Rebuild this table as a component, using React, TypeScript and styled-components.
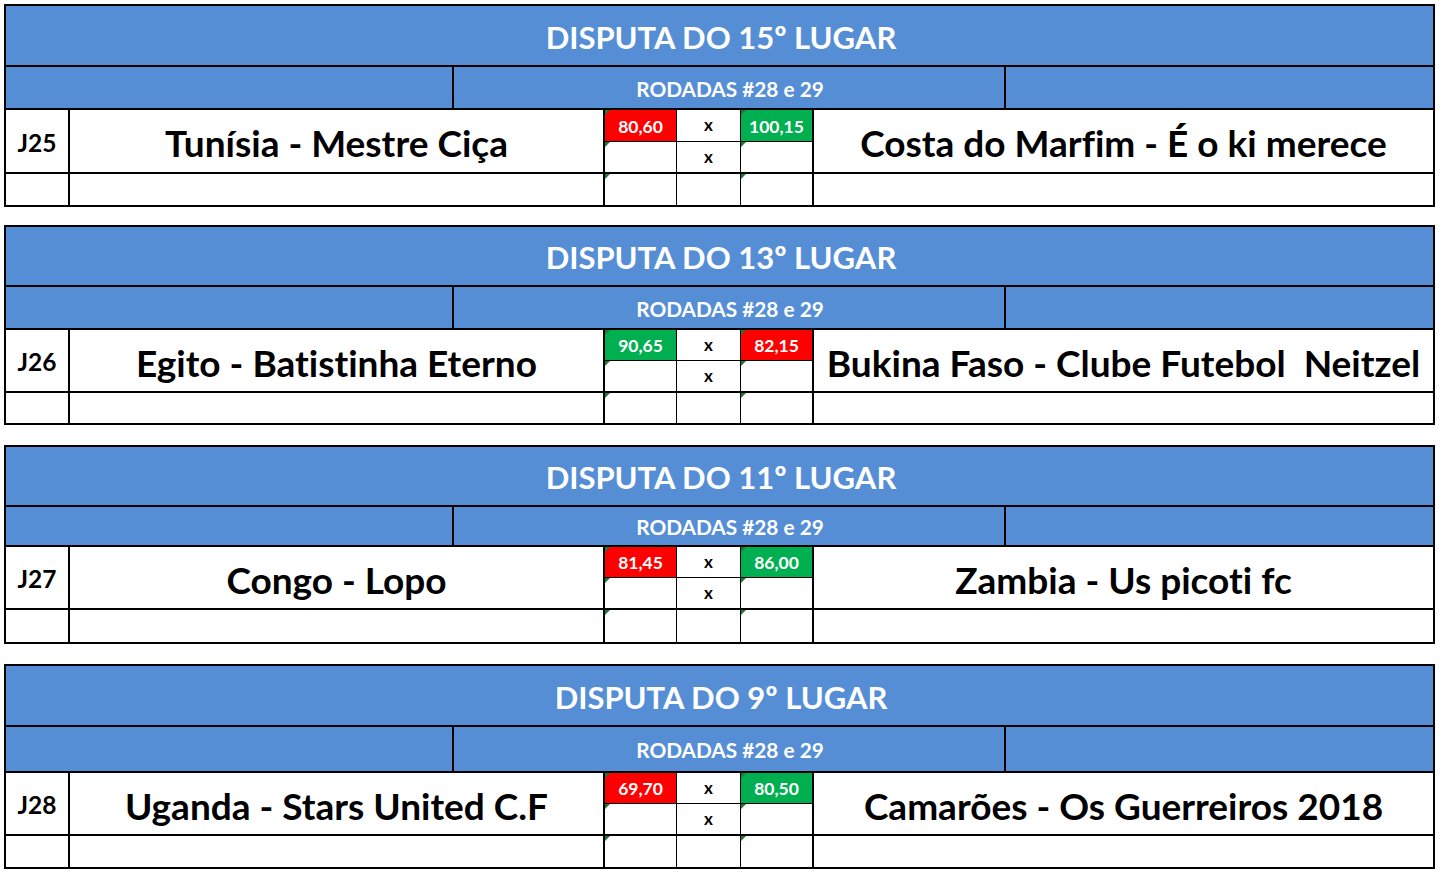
import React from "react";
import styled, { createGlobalStyle } from "styled-components";

const GlobalStyle = createGlobalStyle`
  html, body {
    margin: 0;
    padding: 0;
    background: #ffffff;
  }
  body {
    font-family: Lato, "Open Sans", "Liberation Sans", sans-serif;
    font-weight: 700;
    font-variant-ligatures: none;
  }
  * { box-sizing: border-box; }
`;

const BLUE = "#558ed5";
const RED = "#ff0000";
const GREEN = "#00b050";

const Page = styled.div`
  display: flex;
  flex-direction: column;
  padding: 4px 6px 0 4px;
  width: 1441px;
`;

const Block = styled.section<{ $gap: number }>`
  width: 1431px;
  margin-top: ${(p) => p.$gap}px;
  border: 2px solid #000;
  display: flex;
  flex-direction: column;
  &:first-child { margin-top: 0; }
`;

const TitleRow = styled.div<{ $h: number }>`
  height: ${(p) => p.$h + 2}px;
  background: ${BLUE};
  border-bottom: 2px solid #000;
  color: #fff;
  font-size: 31px;
  display: flex;
  align-items: center;
  justify-content: center;
  padding-left: 3px;
  padding-top: 2px;
`;

const SubRow = styled.div<{ $h: number }>`
  height: ${(p) => p.$h + 2}px;
  display: grid;
  grid-template-columns: 448px 552px 427px;
  border-bottom: 2px solid #000;
  background: ${BLUE};
`;

const SubCell = styled.div<{ $last?: boolean }>`
  border-right: ${(p) => (p.$last ? "none" : "2px solid #000")};
  color: #fff;
  font-size: 20.8px;
  display: flex;
  align-items: center;
  justify-content: center;
  padding-top: 1px;
  padding-left: 2px;
`;

const MatchGrid = styled.div<{ $a: number; $b: number; $c: number }>`
  display: grid;
  grid-template-columns: 64px 535px 72px 64px 73px 619px;
  grid-template-rows: ${(p) => `${p.$a + 1}px ${p.$b + 2}px ${p.$c}px`};
  background: #fff;
`;

const Cell = styled.div<{
  $right?: number;
  $bottom?: number;
  $span?: boolean;
}>`
  position: relative;
  border-right: ${(p) => (p.$right ?? 2)}px solid #000;
  border-bottom: ${(p) => (p.$bottom ?? 0)}px solid #000;
  grid-row: ${(p) => (p.$span ? "span 2" : "auto")};
  display: flex;
  align-items: center;
  justify-content: center;
  color: #000;
  white-space: pre;
  overflow: hidden;
`;

const CodeCell = styled(Cell)`
  font-size: 24.5px;
  padding-top: 2px;
`;

const TeamCell = styled(Cell)`
  font-size: 37px;
  padding-top: 3px;
`;

const ScoreCell = styled(Cell)<{ $bg?: string }>`
  background: ${(p) => p.$bg ?? "#fff"};
  color: #fff;
  font-size: 17.5px;
  padding-top: 1px;
  &::before {
    content: "";
    position: absolute;
    left: 0;
    top: 0;
    border-style: solid;
    border-width: 5px 5px 0 0;
    border-color: #1f7a36 transparent transparent transparent;
  }
`;

const VsCell = styled(Cell)`
  font-size: 17px;
  padding-bottom: 2px;
`;

type Match = {
  title: string;
  code: string;
  home: string;
  away: string;
  homeScore: string;
  awayScore: string;
  homeWin: boolean;
  gap: number;
  titleH: number;
  subH: number;
  rows: [number, number, number];
};

const matches: Match[] = [
  {
    title: "DISPUTA DO 15º LUGAR",
    code: "J25",
    home: "Tunísia - Mestre Ciça",
    away: "Costa do Marfim - É o ki merece",
    homeScore: "80,60",
    awayScore: "100,15",
    homeWin: false,
    gap: 0,
    titleH: 59,
    subH: 41,
    rows: [31, 30, 31],
  },
  {
    title: "DISPUTA DO 13º LUGAR",
    code: "J26",
    home: "Egito - Batistinha Eterno",
    away: "Bukina Faso - Clube Futebol  Neitzel",
    homeScore: "90,65",
    awayScore: "82,15",
    homeWin: true,
    gap: 18,
    titleH: 58,
    subH: 41,
    rows: [30, 30, 30],
  },
  {
    title: "DISPUTA DO 11º LUGAR",
    code: "J27",
    home: "Congo - Lopo",
    away: "Zambia - Us picoti fc",
    homeScore: "81,45",
    awayScore: "86,00",
    homeWin: false,
    gap: 20,
    titleH: 58,
    subH: 38,
    rows: [30, 30, 32],
  },
  {
    title: "DISPUTA DO 9º LUGAR",
    code: "J28",
    home: "Uganda - Stars United C.F",
    away: "Camarões - Os Guerreiros 2018",
    homeScore: "69,70",
    awayScore: "80,50",
    homeWin: false,
    gap: 20,
    titleH: 59,
    subH: 44,
    rows: [30, 30, 31],
  },
];

function MatchBlock({ m }: { m: Match }) {
  const homeBg = m.homeWin ? GREEN : RED;
  const awayBg = m.homeWin ? RED : GREEN;
  return (
    <Block $gap={m.gap}>
      <TitleRow $h={m.titleH}>{m.title}</TitleRow>
      <SubRow $h={m.subH}>
        <SubCell />
        <SubCell>RODADAS #28 e 29</SubCell>
        <SubCell $last />
      </SubRow>
      <MatchGrid $a={m.rows[0]} $b={m.rows[1]} $c={m.rows[2]}>
        <CodeCell $span $bottom={2}>
          {m.code}
        </CodeCell>
        <TeamCell $span $bottom={2}>
          {m.home}
        </TeamCell>
        <ScoreCell $right={1} $bottom={1} $bg={homeBg}>
          {m.homeScore}
        </ScoreCell>
        <VsCell $right={1} $bottom={1}>
          x
        </VsCell>
        <ScoreCell $right={2} $bottom={1} $bg={awayBg}>
          {m.awayScore}
        </ScoreCell>
        <TeamCell $span $bottom={2} $right={0}>
          {m.away}
        </TeamCell>
        <ScoreCell $right={1} $bottom={2} />
        <VsCell $right={1} $bottom={2}>
          x
        </VsCell>
        <ScoreCell $right={2} $bottom={2} />
        <CodeCell />
        <TeamCell />
        <ScoreCell $right={1} />
        <VsCell $right={1} />
        <ScoreCell $right={2} />
        <TeamCell $right={0} />
      </MatchGrid>
    </Block>
  );
}

export default function App() {
  return (
    <>
      <GlobalStyle />
      <Page>
        {matches.map((m) => (
          <MatchBlock key={m.code} m={m} />
        ))}
      </Page>
    </>
  );
}
